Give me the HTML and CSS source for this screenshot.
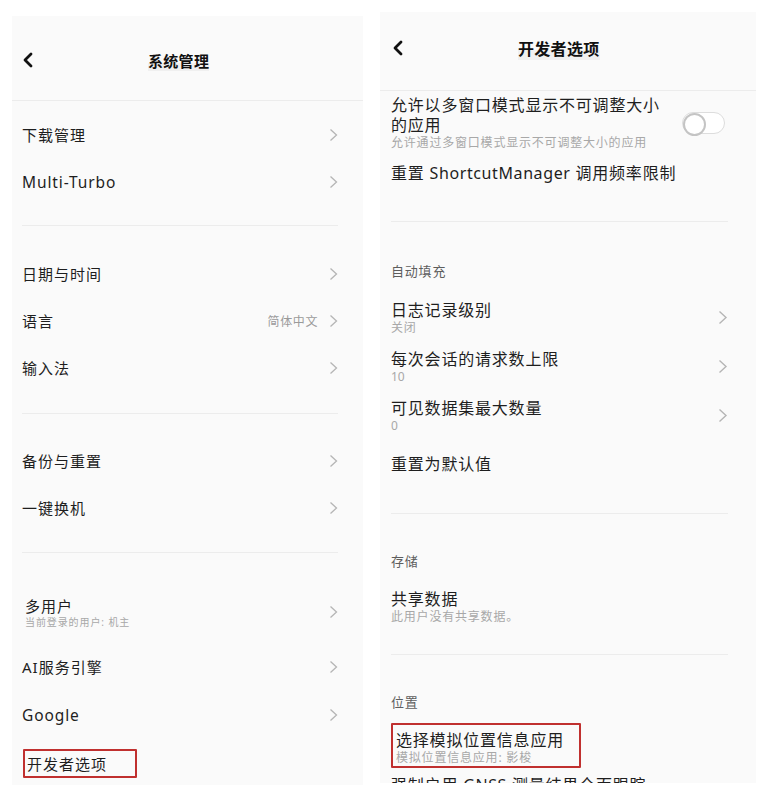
FILE: index.html
```html
<!DOCTYPE html>
<html lang="zh-CN">
<head>
<meta charset="utf-8">
<title>系统管理 / 开发者选项</title>
<link rel="stylesheet" href="styles.css">
</head>
<body>
<div class="page">
  <section class="phone phone-left">
    <header class="bar bar-left">
      <svg class="back" width="11" height="16" viewBox="0 0 11 16"><polyline points="9,2 3,8 9,14" fill="none" stroke="#111" stroke-width="2.8" stroke-linecap="round" stroke-linejoin="round"/></svg>
      <h1 class="title title-left">系统管理</h1>
    </header>

    <div class="group lg lg1">
      <div class="row lrow"><span class="label">下载管理</span><svg class="chev" width="9" height="14" viewBox="0 0 9 14"><polyline points="1.5,1.5 7.5,7 1.5,12.5" fill="none" stroke="#b5b5b5" stroke-width="1.3"/></svg></div>
      <div class="row lrow"><span class="label latin">Multi-Turbo</span><svg class="chev" width="9" height="14" viewBox="0 0 9 14"><polyline points="1.5,1.5 7.5,7 1.5,12.5" fill="none" stroke="#b5b5b5" stroke-width="1.3"/></svg></div>
    </div>

    <div class="group lg lg2">
      <div class="row lrow"><span class="label">日期与时间</span><svg class="chev" width="9" height="14" viewBox="0 0 9 14"><polyline points="1.5,1.5 7.5,7 1.5,12.5" fill="none" stroke="#b5b5b5" stroke-width="1.3"/></svg></div>
      <div class="row lrow"><span class="label">语言</span><span class="end"><span class="value">简体中文</span><svg class="chev" width="9" height="14" viewBox="0 0 9 14"><polyline points="1.5,1.5 7.5,7 1.5,12.5" fill="none" stroke="#b5b5b5" stroke-width="1.3"/></svg></span></div>
      <div class="row lrow"><span class="label">输入法</span><svg class="chev" width="9" height="14" viewBox="0 0 9 14"><polyline points="1.5,1.5 7.5,7 1.5,12.5" fill="none" stroke="#b5b5b5" stroke-width="1.3"/></svg></div>
    </div>

    <div class="group lg lg3">
      <div class="row lrow"><span class="label">备份与重置</span><svg class="chev" width="9" height="14" viewBox="0 0 9 14"><polyline points="1.5,1.5 7.5,7 1.5,12.5" fill="none" stroke="#b5b5b5" stroke-width="1.3"/></svg></div>
      <div class="row lrow"><span class="label">一键换机</span><svg class="chev" width="9" height="14" viewBox="0 0 9 14"><polyline points="1.5,1.5 7.5,7 1.5,12.5" fill="none" stroke="#b5b5b5" stroke-width="1.3"/></svg></div>
    </div>

    <div class="group lg lg4">
      <div class="row lrow lrow-tall">
        <div class="stack stack-user"><span class="label">多用户</span><span class="sub sub-left">当前登录的用户: 机主</span></div>
        <svg class="chev" width="9" height="14" viewBox="0 0 9 14"><polyline points="1.5,1.5 7.5,7 1.5,12.5" fill="none" stroke="#b5b5b5" stroke-width="1.3"/></svg>
      </div>
      <div class="row lrow lrow48"><span class="label">AI服务引擎</span><svg class="chev" width="9" height="14" viewBox="0 0 9 14"><polyline points="1.5,1.5 7.5,7 1.5,12.5" fill="none" stroke="#b5b5b5" stroke-width="1.3"/></svg></div>
      <div class="row lrow lrow48"><span class="label latin">Google</span><svg class="chev" width="9" height="14" viewBox="0 0 9 14"><polyline points="1.5,1.5 7.5,7 1.5,12.5" fill="none" stroke="#b5b5b5" stroke-width="1.3"/></svg></div>
      <div class="row lrow lrow48"><span class="label mark mark-left">开发者选项</span></div>
    </div>
  </section>

  <section class="phone phone-right">
    <header class="bar bar-right">
      <svg class="back" width="11" height="16" viewBox="0 0 11 16"><polyline points="9,2 3,8 9,14" fill="none" stroke="#111" stroke-width="2.8" stroke-linecap="round" stroke-linejoin="round"/></svg>
      <h1 class="title title-right">开发者选项</h1>
    </header>

    <div class="group rg rg1">
      <div class="row rrow-a">
        <div class="stack stack-wrap"><span class="rlabel">允许以多窗口模式显示不可调整大小的应用</span><span class="sub sub-right">允许通过多窗口模式显示不可调整大小的应用</span></div>
        <span class="toggle"></span>
      </div>
      <div class="row rrow"><span class="rlabel">重置 <span class="latin">ShortcutManager</span> 调用频率限制</span></div>
    </div>

    <div class="group rg rg2">
      <div class="section">自动填充</div>
      <div class="row rrow-sub">
        <div class="stack"><span class="rlabel">日志记录级别</span><span class="sub sub-right">关闭</span></div>
        <svg class="chev chev-r" width="10" height="15" viewBox="0 0 10 15"><polyline points="1.5,1.5 8,7.5 1.5,13.5" fill="none" stroke="#b5b5b5" stroke-width="1.4"/></svg>
      </div>
      <div class="row rrow-sub">
        <div class="stack"><span class="rlabel">每次会话的请求数上限</span><span class="sub sub-right num">10</span></div>
        <svg class="chev chev-r" width="10" height="15" viewBox="0 0 10 15"><polyline points="1.5,1.5 8,7.5 1.5,13.5" fill="none" stroke="#b5b5b5" stroke-width="1.4"/></svg>
      </div>
      <div class="row rrow-sub">
        <div class="stack"><span class="rlabel">可见数据集最大数量</span><span class="sub sub-right num">0</span></div>
        <svg class="chev chev-r" width="10" height="15" viewBox="0 0 10 15"><polyline points="1.5,1.5 8,7.5 1.5,13.5" fill="none" stroke="#b5b5b5" stroke-width="1.4"/></svg>
      </div>
      <div class="row rrow"><span class="rlabel">重置为默认值</span></div>
    </div>

    <div class="group rg rg3">
      <div class="section">存储</div>
      <div class="row rrow-sub">
        <div class="stack"><span class="rlabel">共享数据</span><span class="sub sub-right">此用户没有共享数据。</span></div>
      </div>
    </div>

    <div class="group rg rg4">
      <div class="section">位置</div>
      <div class="row rrow-mark">
        <div class="stack mark mark-right"><span class="rlabel">选择模拟位置信息应用</span><span class="sub sub-right">模拟位置信息应用: 影梭</span></div>
      </div>
      <div class="row rrow-last"><span class="rlabel">强制启用 <span class="latin">GNSS</span> 测量结果全面跟踪</span></div>
    </div>
  </section>
</div>
</body>
</html>
```

FILE: styles.css
```css
* { box-sizing: border-box; }

body {
  margin: 0;
  background: #ffffff;
  font-family: "Noto Sans", "Noto Sans CJK SC", sans-serif;
  color: #1e1e1e;
}

.page {
  display: flex;
  align-items: flex-start;
  gap: 17px;
  padding-left: 12px;
}

.phone {
  background: #fafafa;
  overflow: hidden;
}

.phone-left {
  width: 351px;
  height: 769px;
  margin-top: 16px;
}

.phone-right {
  width: 376px;
  height: 771px;
  margin-top: 12px;
}

/* header */
.bar {
  display: flex;
  align-items: center;
  gap: 115px;
  border-bottom: 1px solid #ececec;
}

.bar-left {
  height: 85px;
  padding: 4px 0 0 10px;
}

.bar-right {
  height: 79px;
  padding: 0 0 6px 12px;
}

.back { flex: none; }

.title {
  margin: 0;
  font-weight: 700;
  color: #111;
  letter-spacing: 0.3px;
  background: linear-gradient(to bottom, rgba(0,0,0,0) 60%, #f0f0f0 60%);
}

.title-left { font-size: 15px; }
.title-right { font-size: 16px; }

/* groups */
.group { border-bottom: 1px solid #ececec; }
.group:last-child { border-bottom: none; }

.lg { margin: 0 25px 0 10px; }
.lg1 { padding: 10px 0 20px; }
.lg2 { padding: 24px 0 22px; }
.lg3 { padding: 23px 0 21px; }
.lg4 { padding: 28px 0 0; }

.rg { margin: 0 28px 0 11px; }
.rg1 { padding: 4px 0 25px; }
.rg2 { padding: 39px 0 25px; }
.rg3 { padding: 37px 0 24px; }
.rg4 { padding: 37px 0 0; }

.row {
  display: flex;
  align-items: center;
  justify-content: space-between;
}

.lrow { height: 47px; }
.lrow48 { height: 48px; }
.lrow-tall { height: 62px; }

.label {
  font-size: 15px;
  letter-spacing: 1px;
  line-height: 20px;
  color: #1e1e1e;
}

.latin {
  font-family: "Noto Sans", sans-serif;
  letter-spacing: 0.6px;
}

.label.latin { font-size: 15.5px; letter-spacing: 0.9px; }

.stack {
  display: flex;
  flex-direction: column;
}

.stack-user { padding-left: 3px; }

.sub { color: #a8a8a8; }

.sub-left {
  font-size: 10px;
  line-height: 13px;
  letter-spacing: 0.9px;
}

.sub-right {
  font-size: 12px;
  line-height: 14px;
  letter-spacing: 0.8px;
  margin-top: 1px;
}

.num {
  font-family: "Noto Sans", sans-serif;
  letter-spacing: 0;
}

.end {
  display: flex;
  align-items: center;
  gap: 11px;
}

.value {
  font-size: 12px;
  letter-spacing: 0.6px;
  color: #9a9a9a;
}

.chev { flex: none; }

/* highlight boxes */
.mark {
  border: 2px solid #c0302f;
  border-radius: 1px;
}

.mark-left {
  margin-left: 1px;
  padding: 3px 28px 2px 2px;
}

.mark-right {
  margin-left: 0;
  padding: 5px 15px 1px 3px;
}

/* right rows */
.rlabel {
  font-size: 16px;
  line-height: 20px;
  letter-spacing: 0.8px;
  color: #1e1e1e;
}

.stack-wrap { max-width: 276px; }

.rrow { height: 46px; }
.rg2 .rrow { height: 48px; }

.rrow-sub { height: 49px; }

.rrow-mark { margin-top: 11px; }

.rrow-last { padding-top: 7px; }

.section {
  font-size: 13px;
  line-height: 20px;
  letter-spacing: 0.8px;
  color: #5e5e5e;
  margin-bottom: 12px;
}

.rg3 .section { margin-bottom: 11px; }
.rg3 .rrow-sub { height: 48px; }
.rg4 .section { margin-bottom: 0; }

/* toggle */
.toggle {
  position: relative;
  flex: none;
  width: 43px;
  height: 22px;
  margin-right: 3px;
  border: 1.5px solid #dddddd;
  border-radius: 11px;
  background: #ffffff;
}

.toggle::before {
  content: "";
  position: absolute;
  left: 0;
  top: 0;
  width: 19px;
  height: 19px;
  border: 2px solid #c4c4c4;
  border-radius: 50%;
  background: #ffffff;
}
```
